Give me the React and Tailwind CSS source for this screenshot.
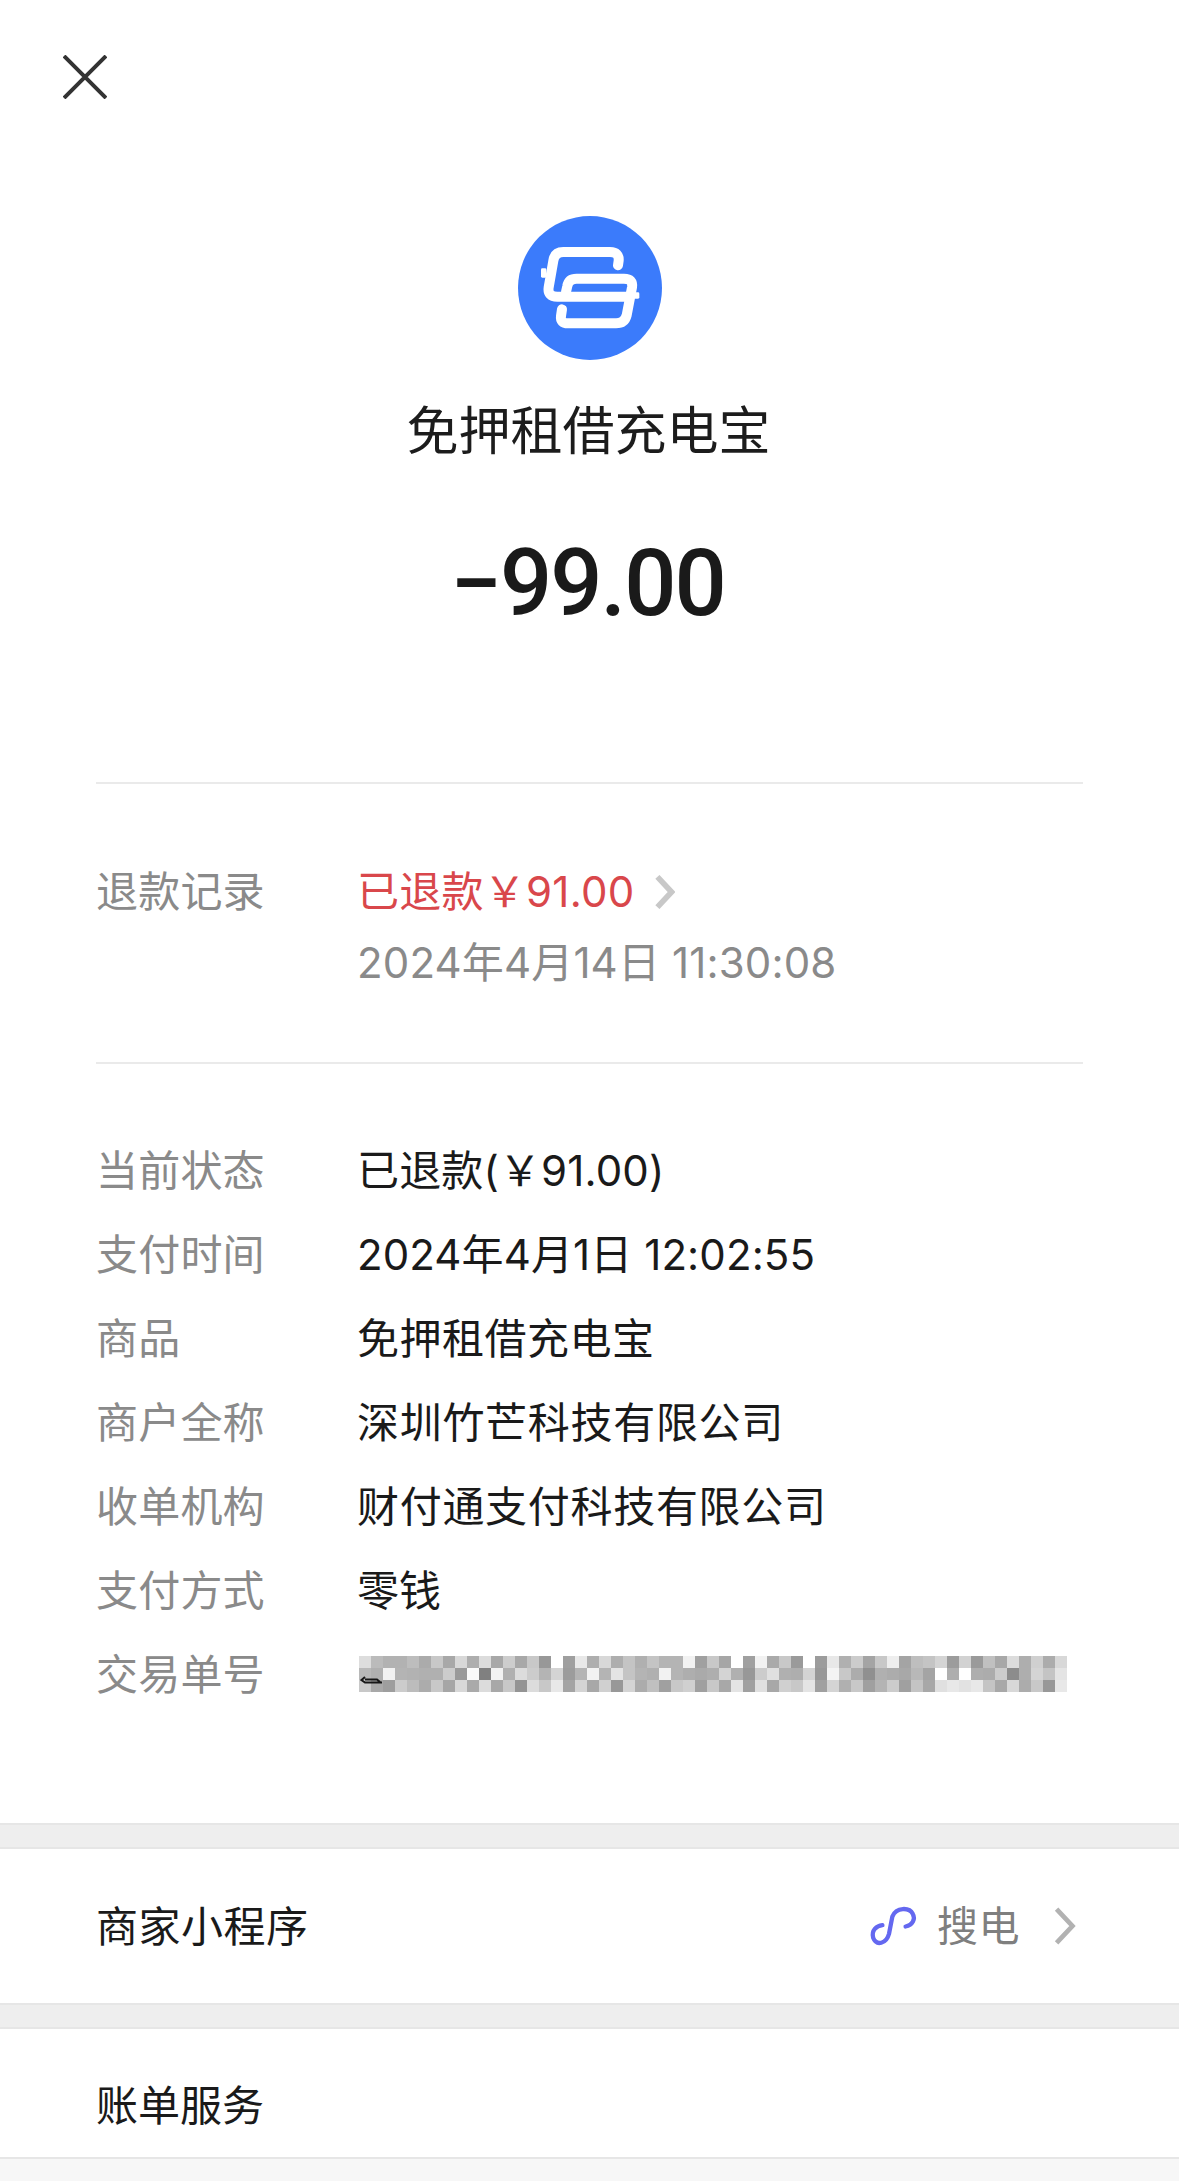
const FONT = "[font-family:Inter,'Noto_Sans_CJK_SC',sans-serif]";

const BLOCKS = [
  ["dd","bb","b2","b2","bd","ab","c8","a8","d8","ae","dc","a8","cd","a8","c8","98","ff","9f","e8","ae","d8","ae","c4","b0","c4","b4","b4","f2","a0","c8","a6","ff","a0","f2","aa","c8","9a","ff","9c","e8","b0","cc","a4","c8","ee","a4","be","c4","d4","9c","d2","9a","c0","a8","dc","ae","d0","ac","d8"],
  ["b8","b0","f2","b4","b2","b0","b0","cc","9a","fa","80","f2","b0","dc","cc","b4","d4","9c","b4","f2","b4","e4","c4","b4","b0","f2","b4","ae","aa","ae","d4","b0","98","cc","e0","b0","ae","d4","98","f4","c8","ac","90","b0","ac","a8","b8","a4","ff","ae","ff","ae","ac","cc","8c","ae","d4","c4","e4"],
  ["c8","a8","9e","cc","bc","ac","c8","a6","d8","aa","dc","a8","c8","94","dc","c8","e8","a4","d4","a8","d0","98","d4","ac","c0","a0","c8","d0","a0","c8","a8","e4","a0","e0","a8","d0","c8","e4","a0","d4","b0","c8","a0","b4","cc","a0","c4","a8","e0","e8","e2","e8","c4","a8","d8","ac","c8","98","e8"],
];

const ROWS = [
  ["当前状态", "已退款(￥91.00)", "tracking-[0.15px]"],
  ["支付时间", "2024年4月1日 12:02:55", "tracking-[0.1px]"],
  ["商品", "免押租借充电宝", "tracking-[0.5px]"],
  ["商户全称", "深圳竹芒科技有限公司", "tracking-[0.7px]"],
  ["收单机构", "财付通支付科技有限公司", "tracking-[0.7px]"],
  ["支付方式", "零钱", ""],
];

function Logo() {
  return (
    <svg viewBox="114 78 432 432" className="w-[144px] h-[144px] block">
      <circle cx="330" cy="294" r="216" fill="#3b7bfb" />
      <g fill="none" stroke="#fff" strokeWidth="30" strokeLinecap="round" strokeLinejoin="round">
        <path d="M414 226 L416 212 Q418 186 390 186 L250 186 Q224 186 220 212 L206 292 Q202 320 232 320 L445 320" />
        <path d="M258 306 L262 288 Q266 266 290 266 L432 266 Q460 266 456 292 L440 376 Q434 400 408 400 L264 400 Q240 400 243 378 L246 358" />
      </g>
      <rect x="183" y="235" width="16" height="28" rx="4" fill="#fff" />
      <rect x="462" y="307" width="16" height="19" rx="4" fill="#fff" />
    </svg>
  );
}

function Chevron({ className, color, width }) {
  return (
    <svg viewBox="0 0 21 36" className={className} fill="none">
      <path d="M3 2 L18 18 L3 34" stroke={color} strokeWidth={width} />
    </svg>
  );
}

function Redacted() {
  return (
    <div className="relative w-[708px] h-[36px] grid grid-cols-[repeat(59,12px)] grid-rows-[repeat(3,12px)]">
      {BLOCKS.flat().map((c, i) => (
        <div key={i} style={{ backgroundColor: `#${c}${c}${c}` }} />
      ))}
      <svg viewBox="0 0 23 8" className="absolute left-[1px] top-[20px] w-[23px] h-[8px]" fill="none">
        <path d="M5 1 L1.5 4 L5 6.5 L22 6.5 M5 3.5 L17 3.5 L20 6" stroke="#161616" strokeWidth="2" />
      </svg>
    </div>
  );
}

function Band() {
  return <div className="h-[26px] bg-[#eeeeee] border-y-2 border-[#e6e6e6] shrink-0" />;
}

export default function App() {
  return (
    <div className={`w-[1179px] h-[2181px] overflow-hidden bg-white flex flex-col ${FONT}`}>
      <div className="h-[216px] pl-[63px] pt-[55px] shrink-0">
        <svg viewBox="0 0 44 44" className="w-[44px] h-[44px]" fill="none">
          <path d="M1 1 L43 43 M43 1 L1 43" stroke="#333333" strokeWidth="4" />
        </svg>
      </div>
      <div className="flex justify-center pl-[1px]"><Logo /></div>
      <div className="mt-[42px] h-[60px] leading-[60px] text-[52px] text-center text-[#1c1c1c] pr-[2px]">免押租借充电宝</div>
      <div className="mt-[72px] h-[100px] leading-[100px] text-[92px] font-medium text-center text-[#1a1a1a] pr-[4px] tracking-[-2px] [font-family:Roboto,sans-serif]">−99.00</div>

      <div className="mt-[148px] mx-[96px] h-[2px] bg-[#eaeaea] shrink-0" />
      <div className="pl-[96px] pt-[78px] pb-[69px] flex text-[42px] leading-[60px]">
        <div className="w-[261px] text-[#8a8a8a] tracking-[0.2px]">退款记录</div>
        <div>
          <div className="flex items-center text-[#d9474b] tracking-[0.25px]">
            已退款￥91.00
            <Chevron className="ml-[20px] w-[21px] h-[34px]" color="#c8c8c8" width="6" />
          </div>
          <div className="mt-[11px] text-[#8a8a8a] tracking-[0.15px]">2024年4月14日 11:30:08</div>
        </div>
      </div>
      <div className="mx-[96px] h-[2px] bg-[#eaeaea] shrink-0" />

      <div className="pt-[64px] pl-[96px] h-[759px] shrink-0 text-[42px]">
        {ROWS.map(([k, v, t]) => (
          <div key={k} className="flex items-center h-[84px]">
            <div className="w-[261px] text-[#8a8a8a] tracking-[0.2px]">{k}</div>
            <div className={`text-[#1a1a1a] ${t}`}>{v}</div>
          </div>
        ))}
        <div className="flex items-center h-[84px]">
          <div className="w-[263px] text-[#8a8a8a] tracking-[0.2px]">交易单号</div>
          <Redacted />
        </div>
      </div>

      <Band />
      <div className="h-[154px] pl-[96px] pr-[103px] flex items-center justify-between text-[42px] shrink-0">
        <span className="text-[#1a1a1a] tracking-[0.5px]">商家小程序</span>
        <div className="flex items-center">
          <svg viewBox="90 73 150 130" className="w-[50px] h-[43px]" fill="none">
            <path d="M200 138 C222 134 230 115 222 100 C212 80 172 78 160 108 L150 160 C142 190 112 198 102 172 C96 150 112 136 130 134" stroke="#6468f0" strokeWidth="13" strokeLinecap="round" />
          </svg>
          <span className="ml-[18px] text-[#7f7f7f] text-[41px] tracking-[0.5px] pt-[1px]">搜电</span>
          <Chevron className="ml-[33px] w-[23px] h-[38px]" color="#b2b2b2" width="4.5" />
        </div>
      </div>
      <Band />
      <div className="h-[128px] pl-[96px] pt-[47px] text-[42px] leading-[60px] text-[#1a1a1a] shrink-0">账单服务</div>
      <div className="grow bg-[#f7f7f7] border-t-2 border-[#e6e6e6]" />
    </div>
  );
}
